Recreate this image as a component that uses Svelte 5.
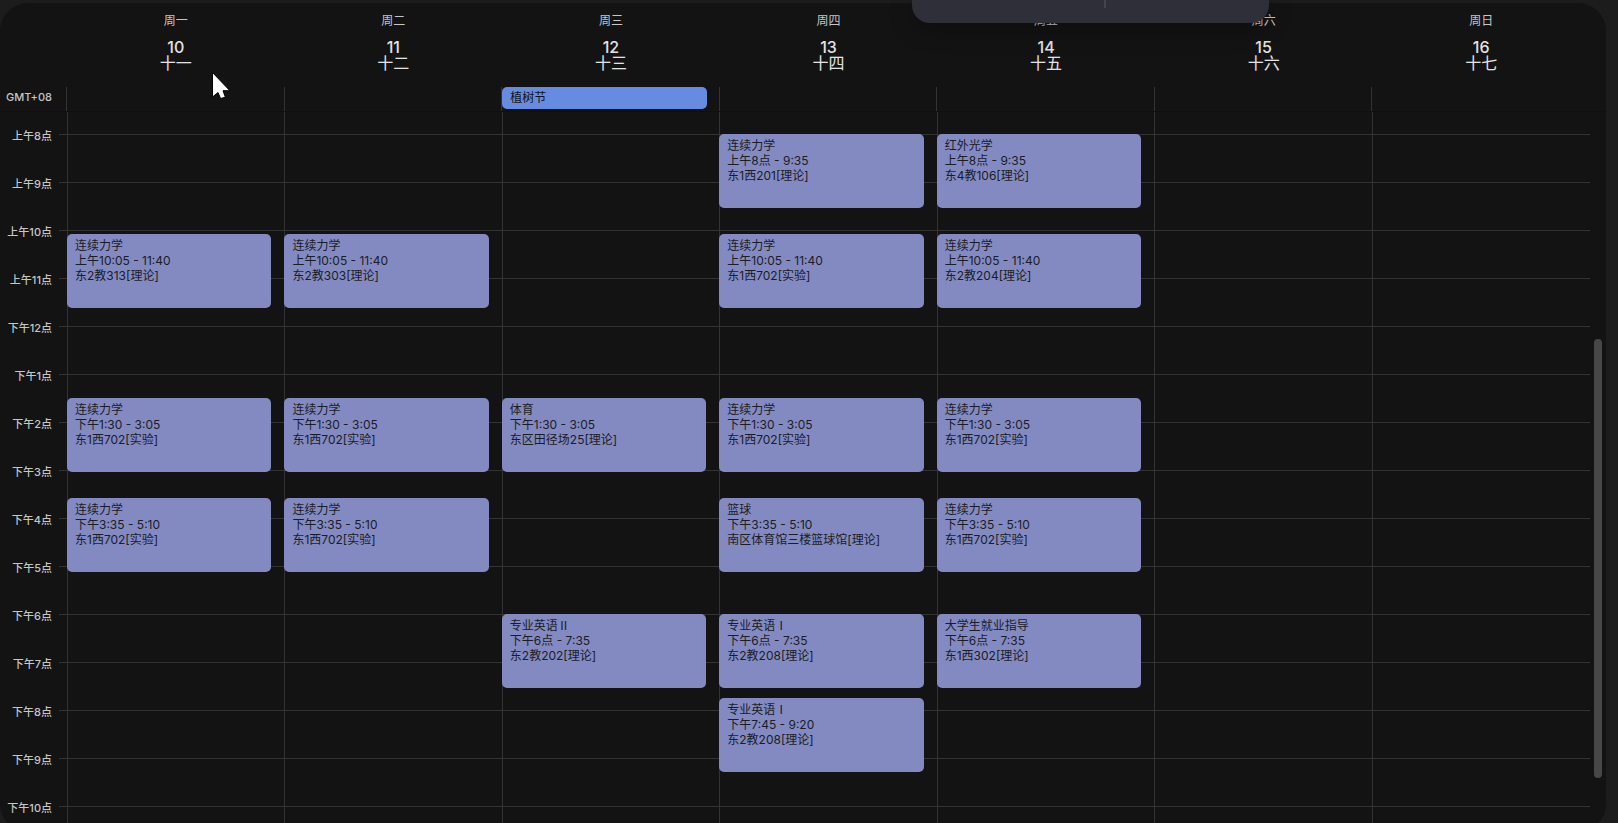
<script>
  const firstHour = 8;
  const days = [
    { week: '周一', date: 10, lunar: '十一' },
    { week: '周二', date: 11, lunar: '十二' },
    { week: '周三', date: 12, lunar: '十三', holiday: '植树节' },
    { week: '周四', date: 13, lunar: '十四' },
    { week: '周五', date: 14, lunar: '十五' },
    { week: '周六', date: 15, lunar: '十六' },
    { week: '周日', date: 16, lunar: '十七' }
  ];
  const hours = Array.from({ length: 15 }, (_, i) => {
    const h = firstHour + i;
    return h < 12 ? `上午${h}点` : `下午${h === 12 ? 12 : h - 12}点`;
  });

  const slots = {
    a: { start: '8:00', label: '上午8点 - 9:35' },
    b: { start: '10:05', label: '上午10:05 - 11:40' },
    c: { start: '13:30', label: '下午1:30 - 3:05' },
    d: { start: '15:35', label: '下午3:35 - 5:10' },
    e: { start: '18:00', label: '下午6点 - 7:35' },
    f: { start: '19:45', label: '下午7:45 - 9:20' }
  };
  const events = [
    [
      ['b', '连续力学', '东2教313[理论]'],
      ['c', '连续力学', '东1西702[实验]'],
      ['d', '连续力学', '东1西702[实验]']
    ],
    [
      ['b', '连续力学', '东2教303[理论]'],
      ['c', '连续力学', '东1西702[实验]'],
      ['d', '连续力学', '东1西702[实验]']
    ],
    [
      ['c', '体育', '东区田径场25[理论]'],
      ['e', '专业英语Ⅱ', '东2教202[理论]']
    ],
    [
      ['a', '连续力学', '东1西201[理论]'],
      ['b', '连续力学', '东1西702[实验]'],
      ['c', '连续力学', '东1西702[实验]'],
      ['d', '篮球', '南区体育馆三楼篮球馆[理论]'],
      ['e', '专业英语Ⅰ', '东2教208[理论]'],
      ['f', '专业英语Ⅰ', '东2教208[理论]']
    ],
    [
      ['a', '红外光学', '东4教106[理论]'],
      ['b', '连续力学', '东2教204[理论]'],
      ['c', '连续力学', '东1西702[实验]'],
      ['d', '连续力学', '东1西702[实验]'],
      ['e', '大学生就业指导', '东1西302[理论]']
    ],
    [],
    []
  ];

  // Each grid row stands for five minutes.
  function row(key) {
    const [h, m] = slots[key].start.split(':').map(Number);
    return ((h - firstHour) * 60 + m) / 5 + 1;
  }
</script>

<div class="page">
  <main class="panel">
    <header class="days">
      {#each days as day}
        <div class="day">
          <span class="week">{day.week}</span>
          <span class="date">{day.date}</span>
          <span class="lunar">{day.lunar}</span>
        </div>
      {/each}
    </header>

    <section class="allday">
      <div class="zone">GMT+08</div>
      <div class="allday-cells">
        {#each days as day}
          <div class="allday-cell">
            {#if day.holiday}
              <button class="holiday">{day.holiday}</button>
            {/if}
          </div>
        {/each}
      </div>
    </section>

    <section class="schedule">
      <div class="hours">
        {#each hours as hour}
          <div class="hour">{hour}</div>
        {/each}
      </div>
      <div class="board">
        {#each events as list}
          <div class="column">
            {#each list as [slot, title, place]}
              <button class="event" style="grid-row: {row(slot)} / span 19">
                <span class="title">{title}</span>
                <span>{slots[slot].label}</span>
                <span>{place}</span>
              </button>
            {/each}
          </div>
        {/each}
      </div>
      <div class="track"><div class="thumb"></div></div>
    </section>
  </main>

  <div class="popup"><div class="divider"></div></div>

  <svg class="cursor" width="20" height="28" viewBox="0 0 20 28" aria-hidden="true">
    <path
      d="M1.5 0.5V25L7 20.5L9.6 26.5L14.4 25.2L12 18.7H18.9Z"
      fill="#fff"
      stroke="#000"
      stroke-width="1"
    />
  </svg>
</div>

<style>
  :global(body) {
    margin: 0;
    background: #1c1c1c;
  }
  .page {
    position: relative;
    height: 100vh;
    overflow: hidden;
    box-sizing: border-box;
    padding: 3px 12px 0 0;
    background: #1c1c1c;
    color: #e3e3e3;
    font-family: Inter, 'Noto Sans CJK SC', sans-serif;
  }
  .panel {
    background: #131313;
    border-radius: 28px;
    overflow: hidden;
  }
  button {
    font: inherit;
    border: 0;
    margin: 0;
    text-align: left;
    cursor: pointer;
  }
  .days {
    display: grid;
    grid-template-columns: repeat(7, 1fr);
    height: 84px;
    padding: 0 16px 0 67px;
  }
  .day {
    display: flex;
    flex-direction: column;
    align-items: center;
    padding-top: 10px;
  }
  .week {
    font-size: 12px;
    line-height: 16px;
    color: #c4c7c5;
  }
  .date {
    margin-top: 10px;
    font-size: 16px;
    line-height: 16px;
    font-weight: 500;
  }
  .lunar {
    font-size: 16px;
    line-height: 16px;
  }
  .allday {
    display: grid;
    grid-template-columns: 66px 1fr;
    height: 24px;
    padding-right: 17px;
  }
  .zone {
    font-size: 11px;
    line-height: 20px;
    font-weight: 500;
    color: #c4c7c5;
    text-align: right;
    padding-right: 14px;
  }
  .allday-cells {
    display: grid;
    grid-template-columns: repeat(7, 1fr);
  }
  .allday-cell {
    display: flex;
    align-items: flex-start;
    border-left: 1px solid #333;
    padding-right: 12px;
  }
  .holiday {
    flex: 1;
    height: 22px;
    padding: 0 8px;
    border-radius: 5px;
    background: #668ce1;
    color: #131314;
    font-size: 12px;
    line-height: 22px;
  }
  .schedule {
    display: grid;
    grid-template-columns: 59px 1fr 16px;
    border-top: 1px solid #101010;
  }
  .hour {
    height: 48px;
    padding-right: 7px;
    font-size: 11px;
    line-height: 48px;
    font-weight: 500;
    text-align: right;
    color: #c4c7c5;
    white-space: nowrap;
  }
  .board {
    display: grid;
    grid-template-columns: repeat(7, 1fr);
    padding: 0 1px 0 8px;
    background: linear-gradient(#333 1px, transparent 1px) 0 22px / 100% 48px;
  }
  .column {
    display: grid;
    grid-auto-rows: 4px;
    align-content: start;
    border-left: 1px solid #333;
    padding: 22px 13px 0 0;
  }
  .event {
    display: flex;
    flex-direction: column;
    justify-content: flex-start;
    margin: 0 0 2px -1px;
    padding: 4px 8px;
    border-radius: 5px;
    background: #828ac1;
    color: #1c1c24;
    font-size: 12px;
    line-height: 15px;
    white-space: nowrap;
    overflow: hidden;
  }
  .title {
    padding-bottom: 2px;
    font-family: 'Noto Sans CJK SC', sans-serif;
    line-height: 13px;
  }
  .track {
    padding: 227px 4px 0;
  }
  .thumb {
    height: 439px;
    border-radius: 4px;
    background: #474747;
  }
  .popup {
    position: absolute;
    top: 0;
    left: 912px;
    width: 357px;
    height: 23px;
    border-radius: 0 0 18px 18px;
    background: #2f2f3a;
    box-shadow: 0 6px 24px rgba(0, 0, 0, 0.3);
  }
  .divider {
    width: 2px;
    height: 8px;
    margin-left: 192px;
    background: #45454f;
  }
  .cursor {
    position: absolute;
    left: 211px;
    top: 72px;
  }
</style>
